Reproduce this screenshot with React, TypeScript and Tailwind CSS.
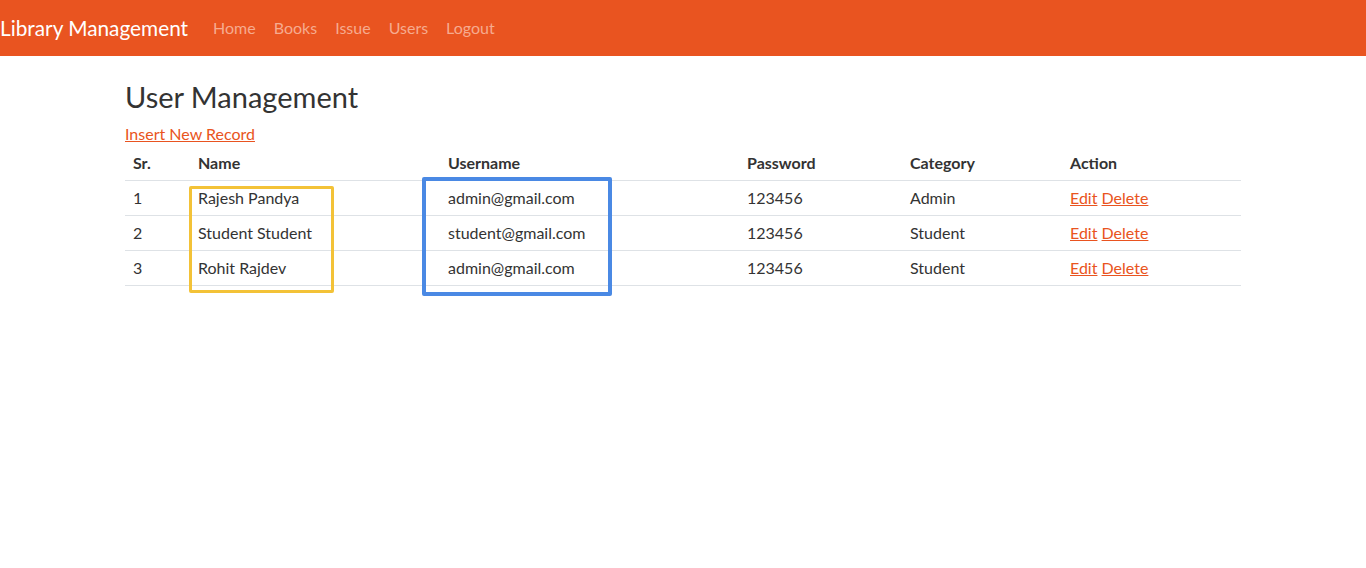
import React from 'react';

interface UserRow {
  sr: number;
  name: string;
  username: string;
  password: string;
  category: string;
}

const users: UserRow[] = [
  { sr: 1, name: 'Rajesh Pandya', username: 'admin@gmail.com', password: '123456', category: 'Admin' },
  { sr: 2, name: 'Student Student', username: 'student@gmail.com', password: '123456', category: 'Student' },
  { sr: 3, name: 'Rohit Rajdev', username: 'admin@gmail.com', password: '123456', category: 'Student' },
];

const navLinks = ['Home', 'Books', 'Issue', 'Users', 'Logout'];

export default function App() {
  return (
    <div className="min-h-screen bg-white text-[#333333] font-['Lato','Noto_Sans',sans-serif]">
      {/* Navbar */}
      <nav className="h-[56px] bg-[#e95420] flex items-center">
        <a href="#" className="text-white text-[20.8px] leading-[30px] mr-[25px] whitespace-nowrap">
          Library Management
        </a>
        <div className="flex items-center gap-[18px]">
          {navLinks.map((l) => (
            <a key={l} href="#" className="text-[16px] leading-[24px] text-[#f6ab8f]">
              {l}
            </a>
          ))}
        </div>
      </nav>

      {/* Content */}
      <div className="w-[1116px] mx-auto mt-[24px]">
        <h3 className="text-[29px] leading-[34px] font-normal mb-[8px]">User Management</h3>
        <a href="#" className="text-[16px] leading-[24px] text-[#e95420] underline">
          Insert New Record
        </a>

        <div className="relative">
          <table className="w-full text-[16px] leading-[24px] border-collapse">
            <thead>
              <tr className="border-b border-[#dee2e6]">
                <th className="text-left font-bold py-[5px] px-[8px] w-[65px]">Sr.</th>
                <th className="text-left font-bold py-[5px] px-[8px] w-[250px]">Name</th>
                <th className="text-left font-bold py-[5px] px-[8px] w-[299px]">Username</th>
                <th className="text-left font-bold py-[5px] px-[8px] w-[163px]">Password</th>
                <th className="text-left font-bold py-[5px] px-[8px] w-[160px]">Category</th>
                <th className="text-left font-bold py-[5px] px-[8px]">Action</th>
              </tr>
            </thead>
            <tbody>
              {users.map((u) => (
                <tr key={u.sr} className="border-b border-[#dee2e6]">
                  <td className="py-[5px] px-[8px]">{u.sr}</td>
                  <td className="py-[5px] px-[8px]">{u.name}</td>
                  <td className="py-[5px] px-[8px]">{u.username}</td>
                  <td className="py-[5px] px-[8px]">{u.password}</td>
                  <td className="py-[5px] px-[8px]">{u.category}</td>
                  <td className="py-[5px] px-[8px]">
                    <a href="#" className="text-[#e95420] underline">Edit</a>{' '}
                    <a href="#" className="text-[#e95420] underline">Delete</a>
                  </td>
                </tr>
              ))}
            </tbody>
          </table>

          {/* Annotation highlights */}
          <div className="absolute left-[64px] top-[40px] w-[145px] h-[107px] border-[3px] border-[#f3c237] rounded-[2px] pointer-events-none" />
          <div className="absolute left-[297px] top-[31px] w-[190px] h-[119px] border-[4px] border-[#4a89e4] rounded-[2px] pointer-events-none" />
        </div>
      </div>
    </div>
  );
}
